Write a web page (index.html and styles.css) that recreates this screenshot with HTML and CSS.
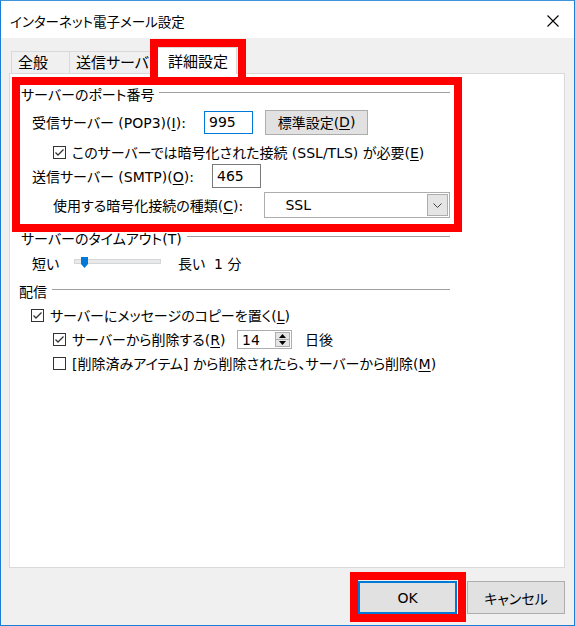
FILE: index.html
```html
<!DOCTYPE html>
<html>
<head>
	<meta charset="utf-8">
	<title>インターネット電子メール設定</title>
	<link rel="stylesheet" href="styles.css">
</head>
<body>
	<div class="window">
		<div class="titlebar">
			<span class="title">インターネット電子メール設定</span>
			<svg class="close" width="12" height="12" viewBox="0 0 12 12">
				<path d="M0.5 0.5L11.5 11.5M11.5 0.5L0.5 11.5" stroke="#000" stroke-width="1.1" fill="none"></path>
			</svg>
		</div>

		<div class="dialog-body">
			<div class="tabstrip">
				<div class="tab tab-general">全般</div>
				<div class="tab tab-send">送信サーバー</div>
				<div class="tab active">詳細設定</div>
			</div>

			<div class="panel">
				<!-- port numbers -->
				<div class="group">
					<div class="group-title"><span>サーバーのポート番号</span><i class="rule"></i></div>
					<div class="row row-in">
						<span class="label label-in">受信サーバー (POP3)(<u>I</u>):</span>
						<span class="field focused">995</span>
						<span class="btn btn-default">標準設定(<u>D</u>)</span>
					</div>
					<div class="row row-check indent">
						<span class="checkbox"><svg width="11" height="11" viewBox="0 0 11 11"><path d="M1.5 5.5L4 8L9.5 2.5" stroke="#333" stroke-width="1.3" fill="none"></path></svg></span>
						<span>このサーバーでは暗号化された接続 (SSL/TLS) が必要(<u>E</u>)</span>
					</div>
					<div class="row row-out">
						<span class="label label-out">送信サーバー (SMTP)(<u>O</u>):</span>
						<span class="field">465</span>
					</div>
					<div class="row row-sel indent">
						<span class="label label-sel">使用する暗号化接続の種類(<u>C</u>):</span>
						<span class="select">
							<span class="select-text">SSL</span>
							<span class="select-btn"><svg width="9" height="5" viewBox="0 0 9 5"><path d="M0.5 0.5L4.5 4.5L8.5 0.5" stroke="#444" stroke-width="1" fill="none"></path></svg></span>
						</span>
					</div>
				</div>

				<!-- timeout -->
				<div class="group group-timeout">
					<div class="group-title"><span>サーバーのタイムアウト(T)</span><i class="rule"></i></div>
					<div class="row row-slider">
						<span class="label label-short">短い</span>
						<span class="track">
							<svg class="thumb" width="7" height="11" viewBox="0 0 7 11"><path d="M0 0H7V7L3.5 11L0 7Z" fill="#0078d7"></path></svg>
						</span>
						<span class="label-long">長い&nbsp;&nbsp;1 分</span>
					</div>
				</div>

				<!-- delivery -->
				<div class="group group-deliver">
					<div class="group-title"><span>配信</span><i class="rule"></i></div>
					<div class="row row-check first">
						<span class="checkbox"><svg width="11" height="11" viewBox="0 0 11 11"><path d="M1.5 5.5L4 8L9.5 2.5" stroke="#333" stroke-width="1.3" fill="none"></path></svg></span>
						<span>サーバーにメッセージのコピーを置く(<u>L</u>)</span>
					</div>
					<div class="row row-check indent">
						<span class="check-wide">
							<span class="checkbox"><svg width="11" height="11" viewBox="0 0 11 11"><path d="M1.5 5.5L4 8L9.5 2.5" stroke="#333" stroke-width="1.3" fill="none"></path></svg></span>
							<span>サーバーから削除する(<u>R</u>)</span>
						</span>
						<span class="spinner">
							<span class="spin-text">14</span>
							<span class="spin-btns">
								<span class="spin-up"><svg width="7" height="4" viewBox="0 0 7 4"><path d="M3.5 0L7 4H0Z" fill="#000"></path></svg></span>
								<span class="spin-down"><svg width="7" height="4" viewBox="0 0 7 4"><path d="M0 0H7L3.5 4Z" fill="#000"></path></svg></span>
							</span>
						</span>
						<span class="days">日後</span>
					</div>
					<div class="row row-check indent">
						<span class="checkbox"></span>
						<span>[削除済みアイテム] から削除されたら、サーバーから削除(<u>M</u>)</span>
					</div>
				</div>
			</div>

			<div class="btnrow">
				<span class="btn btn-ok">OK</span>
				<span class="btn btn-cancel">キャンセル</span>
			</div>
		</div>

		<!-- red annotation boxes -->
		<div class="mark mark-tab"></div>
		<div class="mark mark-port"></div>
		<div class="mark mark-ok"></div>
	</div>
</body>
</html>
```

FILE: styles.css
```css
html, body {
	margin: 0;
	padding: 0;
}

body {
	font-family: "DejaVu Sans", "Noto Sans CJK JP", sans-serif;
	font-feature-settings: "palt";
	font-size: 14px;
	color: #000;
	background: #fff;
}

u {
	text-decoration-thickness: 1px;
	text-underline-offset: 2px;
}

.window {
	position: relative;
	width: 575px;
	height: 626px;
	box-sizing: border-box;
	border: 1px solid #1a7fd4;
	border-top-color: #3f95dc;
	background: #f0f0f0;
}

.titlebar {
	height: 37px;
	background: #fff;
	display: flex;
	align-items: center;
	padding-left: 9px;
	padding-right: 15px;
}

.title {
	flex: 1;
	font-family: "Noto Sans CJK JP", sans-serif;
	font-size: 13.5px;
	line-height: 20px;
	margin-top: 3px;
}

.close {
	margin-top: 2px;
}

.dialog-body {
	padding: 9px 9px 0 8px;
}

/* tabs */
.tabstrip {
	display: flex;
	align-items: flex-end;
	height: 27px;
	padding-left: 2px;
	font-size: 15px;
}

.tab {
	box-sizing: border-box;
	height: 22px;
	margin-bottom: 1px;
	border: 1px solid #d9d9d9;
	border-bottom: none;
	background: #f0f0f0;
	line-height: 22px;
	padding-left: 6px;
	white-space: nowrap;
}

.tab-general {
	width: 59px;
}

.tab-send {
	width: 90px;
	margin-left: -1px;
	padding-left: 6px;
}

.tab.active {
	position: relative;
	z-index: 1;
	width: 80px;
	height: 27px;
	margin-bottom: 0;
	margin-left: -2px;
	background: #fff;
	line-height: 28px;
	padding-left: 10px;
}

.panel {
	box-sizing: border-box;
	height: 495px;
	margin-top: -1px;
	border: 1px solid #d9d9d9;
	background: #fff;
	padding-top: 11px;
}

/* groups */
.group {
	width: 429px;
	margin-left: 11px;
}

.group-timeout {
	margin-top: 11px;
}

.group-deliver {
	margin-top: 9px;
}

.group-title {
	display: flex;
	align-items: center;
	height: 20px;
	line-height: 20px;
	white-space: nowrap;
}

.rule {
	flex: 1;
	height: 1px;
	background: #a0a0a0;
	margin-left: 5px;
	margin-bottom: 6px;
}

.group-deliver .group-title span {
	margin-left: -2px;
}

.row {
	display: flex;
	align-items: center;
	white-space: nowrap;
	padding-left: 11px;
}

.row.indent {
	padding-left: 32px;
}

.row-in {
	height: 26px;
	margin-top: 4px;
}

.row-check {
	height: 22px;
	margin-top: 2px;
}

.row-in + .row-check {
	margin-top: 6px;
}

.row-check.first {
	padding-left: 10px;
}

.row-out {
	height: 26px;
}

.row-sel {
	height: 26px;
	margin-top: 3px;
}

.label-in {
	width: 172px;
}

.label-out {
	width: 180px;
}

.label-sel {
	width: 212px;
}

.field {
	box-sizing: border-box;
	width: 49px;
	height: 24px;
	border: 1px solid #7a7a7a;
	background: #fff;
	padding-left: 4px;
	line-height: 22px;
}

.field.focused {
	height: 23px;
	border-color: #0078d7;
	line-height: 21px;
}

.btn {
	box-sizing: border-box;
	display: flex;
	align-items: center;
	justify-content: center;
	background: #e1e1e1;
	border: 1px solid #adadad;
}

.btn-default {
	width: 103px;
	height: 25px;
	margin-left: 12px;
}

.checkbox {
	box-sizing: border-box;
	display: flex;
	align-items: center;
	justify-content: center;
	width: 13px;
	height: 13px;
	border: 1px solid #333;
	background: #fff;
	margin-right: 6px;
	flex-shrink: 0;
}

.select {
	box-sizing: border-box;
	display: flex;
	align-items: center;
	width: 186px;
	height: 26px;
	border: 1px solid #adadad;
	background: #fff;
	padding: 1px;
}

.select-text {
	flex: 1;
	padding-left: 19px;
}

.select-btn {
	box-sizing: border-box;
	display: flex;
	align-items: center;
	justify-content: center;
	width: 21px;
	height: 22px;
	border: 1px solid #adadad;
	background: #e5e5e5;
}

/* slider */
.row-slider {
	height: 22px;
	margin-top: 2px;
}

.label-short {
	width: 42px;
	margin-top: 2px;
}

.track {
	position: relative;
	box-sizing: border-box;
	width: 87px;
	height: 5px;
	background: #e7eaea;
	border: 1px solid #d6d6d6;
	margin-bottom: 2px;
}

.thumb {
	position: absolute;
	left: 6px;
	top: -3px;
}

.label-long {
	margin-left: 17px;
	margin-top: 2px;
}

/* spinner */
.check-wide {
	display: flex;
	align-items: center;
	width: 184px;
}

.spinner {
	box-sizing: border-box;
	display: flex;
	width: 55px;
	height: 19px;
	border: 1px solid #adadad;
	background: #fff;
}

.spin-text {
	flex: 1;
	padding-left: 4px;
	line-height: 19px;
}

.spin-btns {
	display: flex;
	flex-direction: column;
	width: 15px;
	margin: 1px 1px 1px 0;
}

.spin-up, .spin-down {
	box-sizing: border-box;
	flex: 1;
	display: flex;
	align-items: center;
	justify-content: center;
	background: #e5e5e5;
	border: 1px solid #adadad;
}

.spin-down {
	border-top: none;
}

.days {
	margin-left: 13px;
}

/* dialog buttons */
.btnrow {
	display: flex;
	justify-content: flex-end;
	gap: 10px;
	margin-top: 13px;
}

.btn-ok {
	width: 99px;
	height: 33px;
	border: 2px solid #0078d7;
}

.btn-cancel {
	width: 98px;
	height: 33px;
}

/* red marks drawn over the screenshot */
.mark {
	position: absolute;
	box-sizing: border-box;
	border: 8px solid #ff0000;
	z-index: 5;
}

.mark-tab {
	left: 149px;
	top: 38px;
	width: 96px;
	height: 46px;
}

.mark-port {
	left: 11px;
	top: 76px;
	width: 450px;
	height: 155px;
}

.mark-ok {
	left: 349px;
	top: 571px;
	width: 116px;
	height: 50px;
}
```
